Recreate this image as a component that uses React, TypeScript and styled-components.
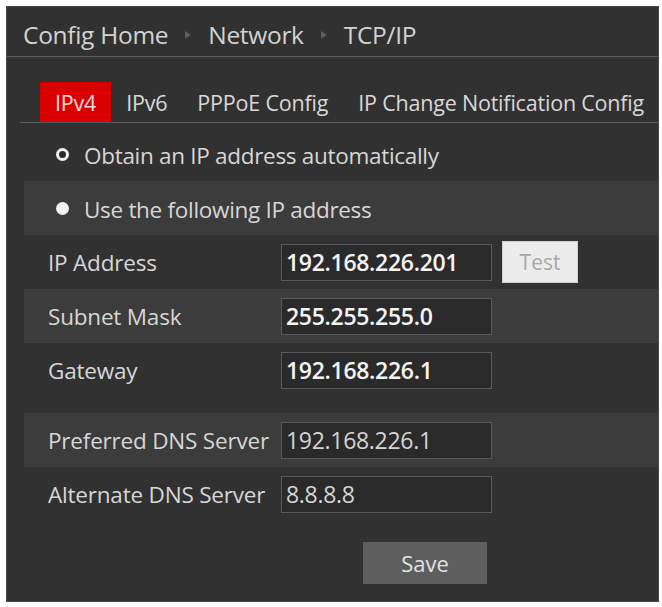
import * as React from 'react';
import styled, { createGlobalStyle } from 'styled-components';

const GlobalStyle = createGlobalStyle`
    body {
        margin: 0;
        background: #ffffff;
        font-family: "Open Sans", "Noto Sans", sans-serif;
    }
`;

const fields = [
    { label: 'IP Address', value: '192.168.226.201', strong: true, test: true, shaded: false },
    { label: 'Subnet Mask', value: '255.255.255.0', strong: true, test: false, shaded: true },
    { label: 'Gateway', value: '192.168.226.1', strong: true, test: false, shaded: false },
];

const dnsFields = [
    { label: 'Preferred DNS Server', value: '192.168.226.1', shaded: true },
    { label: 'Alternate DNS Server', value: '8.8.8.8', shaded: false },
];

const tabs = ['IPv4', 'IPv6', 'PPPoE Config', 'IP Change Notification Config'];

export default function App() {
    return (
        <>
            <GlobalStyle />
            <Panel>
                <Header>
                    <Crumb>Config Home</Crumb>
                    <Arrow />
                    <Crumb>Network</Crumb>
                    <Arrow />
                    <Crumb>TCP/IP</Crumb>
                </Header>
                <TabBar>
                    {tabs.map((t, i) => (
                        <Tab key={t} $active={i === 0}>{t}</Tab>
                    ))}
                </TabBar>
                <Content>
                    <Row>
                        <Radio $checked />
                        <RadioLabel>Obtain an IP address automatically</RadioLabel>
                    </Row>
                    <Row $shaded>
                        <Radio />
                        <RadioLabel>Use the following IP address</RadioLabel>
                    </Row>
                    {fields.map((f) => (
                        <Row key={f.label} $shaded={f.shaded} $field>
                            <Label>{f.label}</Label>
                            <Input $strong={f.strong}>{f.value}</Input>
                            {f.test && <TestButton>Test</TestButton>}
                        </Row>
                    ))}
                    <Spacer />
                    {dnsFields.map((f) => (
                        <Row key={f.label} $shaded={f.shaded} $field>
                            <Label>{f.label}</Label>
                            <Input>{f.value}</Input>
                        </Row>
                    ))}
                    <Actions>
                        <SaveButton>Save</SaveButton>
                    </Actions>
                </Content>
            </Panel>
        </>
    );
}

const Panel = styled.div`
    margin: 6px 0 0 6px;
    width: 653px;
    height: 596px;
    box-sizing: border-box;
    background: #313131;
    border: 1px solid #4a4a4a;
    display: flex;
    flex-direction: column;
`;

const Header = styled.div`
    height: 50px;
    flex-shrink: 0;
    box-sizing: border-box;
    padding: 6px 0 0 16px;
    display: flex;
    align-items: center;
    border-bottom: 1px solid #5c5c5c;
    gap: 17px;
`;

const Crumb = styled.span`
    font-size: 24.5px;
    color: #d2d2d2;
    letter-spacing: -0.3px;
`;

const Arrow = styled.span`
    width: 0;
    height: 0;
    border-top: 4px solid transparent;
    border-bottom: 4px solid transparent;
    border-left: 6px solid #5e5e5e;
`;

const TabBar = styled.div`
    margin: 25px 0 0 13px;
    padding-left: 20px;
    height: 40px;
    display: flex;
    border-bottom: 1px solid #5a5a5a;
`;

const Tab = styled.div<{ $active?: boolean }>`
    padding: 0 15px;
    display: flex;
    align-items: center;
    font-size: 21.5px;
    letter-spacing: -0.2px;
    color: ${(p) => (p.$active ? '#ffd9d9' : '#d8d8d8')};
    background: ${(p) => (p.$active ? '#d90000' : 'transparent')};
    white-space: nowrap;
`;

const Content = styled.div`
    margin: 4px 0 0 17px;
    display: flex;
    flex-direction: column;
`;

const Row = styled.div<{ $shaded?: boolean; $field?: boolean }>`
    height: 54px;
    display: flex;
    align-items: center;
    padding-left: ${(p) => (p.$field ? '24px' : '32px')};
    background: ${(p) => (p.$shaded ? '#3c3c3c' : 'transparent')};
`;

const Radio = styled.span<{ $checked?: boolean }>`
    width: 13px;
    height: 13px;
    flex-shrink: 0;
    border-radius: 50%;
    box-sizing: border-box;
    background: ${(p) => (p.$checked ? '#2a2a2a' : '#f2f2f2')};
    border: ${(p) => (p.$checked ? '3px solid #f2f2f2' : 'none')};
    margin-right: 15px;
`;

const RadioLabel = styled.span`
    font-size: 22.5px;
    color: #d6d6d6;
    letter-spacing: -0.3px;
    white-space: nowrap;
    padding-top: 2px;
`;

const Label = styled.span`
    width: 233px;
    flex-shrink: 0;
    font-size: 22.5px;
    color: #d6d6d6;
    white-space: nowrap;
    letter-spacing: -0.2px;
`;

const Input = styled.div<{ $strong?: boolean }>`
    width: 211px;
    height: 37px;
    flex-shrink: 0;
    box-sizing: border-box;
    border: 1px solid #5a5a5a;
    background: #2a2a2a;
    padding-left: 4px;
    display: flex;
    align-items: center;
    font-size: 23px;
    letter-spacing: -0.3px;
    font-weight: ${(p) => (p.$strong ? 600 : 400)};
    color: ${(p) => (p.$strong ? '#f4f4f4' : '#d4d4d4')};
`;

const TestButton = styled.div`
    margin-left: 10px;
    width: 76px;
    height: 42px;
    box-sizing: border-box;
    border: 1px solid #d0d0d0;
    background: #ececec;
    color: #a8a8a8;
    font-size: 21px;
    display: flex;
    align-items: center;
    justify-content: center;
`;

const Spacer = styled.div`
    height: 16px;
`;

const Actions = styled.div`
    padding: 21px 0 0 339px;
`;

const SaveButton = styled.div`
    width: 124px;
    height: 42px;
    background: #5e5e5e;
    color: #e2e2e2;
    font-size: 22px;
    display: flex;
    align-items: center;
    justify-content: center;
`;
